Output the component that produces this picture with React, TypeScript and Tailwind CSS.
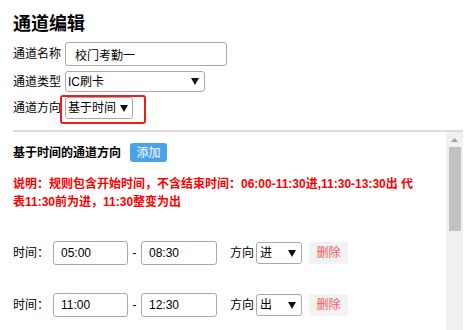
import React from 'react'

const FONT = "font-['Liberation_Sans','Noto_Sans_CJK_SC',sans-serif]"

function Arrow({ className = '' }: { className?: string }) {
  return (
    <svg className={'pointer-events-none absolute ' + className} width="8" height="7" viewBox="0 0 8 7">
      <polygon points="0,0 8,0 4,7" fill="#111" />
    </svg>
  )
}

function Select({ value, options, className, arrowClass }: { value: string; options: string[]; className: string; arrowClass: string }) {
  return (
    <div className="relative">
      <select
        defaultValue={value}
        className={'appearance-none border border-[#a9a9a9] rounded-[3px] bg-white text-[12px] text-black outline-none ' + className}
      >
        {options.map((o) => (
          <option key={o}>{o}</option>
        ))}
      </select>
      <Arrow className={arrowClass} />
    </div>
  )
}

const rows = [
  { from: '05:00', to: '08:30', dir: '进' },
  { from: '11:00', to: '12:30', dir: '出' },
]

export default function App() {
  return (
    <div className={'h-[330px] overflow-hidden bg-white text-[12px] text-black flex flex-col pl-[13px] pr-[8px] ' + FONT}>
      <h3 className="pt-[13px] text-[18px] leading-[22px] font-bold">通道编辑</h3>

      {/* 基本信息 */}
      <div className="mt-[7px] flex flex-col gap-[5px]">
        <div className="flex items-center gap-[4px]">
          <span className="w-[48px]">通道名称</span>
          <input
            defaultValue="校门考勤一"
            className="w-[162px] h-[24px] border border-[#a9a9a9] rounded-[3px] px-[9px] text-[12px] outline-none"
          />
        </div>
        <div className="flex items-center gap-[4px]">
          <span className="w-[48px]">通道类型</span>
          <Select
            value="IC刷卡"
            options={['IC刷卡', '人脸识别', '二维码']}
            className="w-[140px] h-[21px] pl-[2px]"
            arrowClass="right-[6px] top-[7px]"
          />
        </div>
        <div className="flex items-center gap-[4px]">
          <span className="w-[48px]">通道方向</span>
          <div className="relative">
            <Select
              value="基于时间"
              options={['基于时间', '固定进', '固定出']}
              className="w-[68px] h-[22px] pl-[2px]"
              arrowClass="right-[5px] top-[8px]"
            />
            {/* 标注框 */}
            <span className="pointer-events-none absolute -left-[5px] -top-[2px] w-[86px] h-[29px] border-2 border-[#ee1c1c] rounded-[3px]" />
          </div>
        </div>
      </div>

      {/* 时间规则列表 */}
      <div className="mt-[11px] flex-1 min-h-0 flex border-t-2 border-[#dcdcdc]">
        <div className="flex-1 min-w-0 overflow-hidden pr-[8px]">
          <div className="pt-[11px] flex items-baseline gap-[9px]">
            <span className="font-bold">基于时间的通道方向</span>
            <button className="h-[19px] w-[37px] pt-[2px] rounded-[3px] bg-[#4aa3e9] text-white text-[12px] leading-[17px]">
              添加
            </button>
          </div>

          <p className="mt-[13px] leading-[18px] font-bold text-[#ff0000]">
            说明：规则包含开始时间，不含结束时间：06:00-11:30进,11:30-13:30出 代
            <br />
            表11:30前为进，11:30整变为出
          </p>

          <div className="mt-[30px] flex flex-col gap-[28px]">
            {rows.map((r, i) => (
              <div key={i} className="flex items-center">
                <span className="w-[40px]">时间：</span>
                <input
                  defaultValue={r.from}
                  className="w-[75px] h-[24px] border border-[#a9a9a9] rounded-[3px] px-[7px] text-[12px] outline-none"
                />
                <span className="w-[13px] text-center">-</span>
                <input
                  defaultValue={r.to}
                  className="w-[76px] h-[24px] border border-[#a9a9a9] rounded-[3px] px-[7px] text-[12px] outline-none"
                />
                <span className="ml-[13px] mr-[2px]">方向</span>
                <Select
                  value={r.dir}
                  options={['进', '出']}
                  className="w-[46px] h-[22px] pl-[3px]"
                  arrowClass="right-[6px] top-[8px]"
                />
                <button className="ml-[7px] h-[22px] w-[39px] rounded-[3px] bg-[#f2f2f2] text-[12px] text-[#f25a58]">
                  删除
                </button>
              </div>
            ))}
          </div>
        </div>

        {/* 滚动条 */}
        <div className="w-[17px] bg-[#f0f0f0] flex flex-col">
          <div className="h-[15px] flex items-center justify-center">
            <svg width="7" height="4" viewBox="0 0 7 4">
              <polygon points="0,4 7,4 3.5,0" fill="#a3a3a3" />
            </svg>
          </div>
          <div className="ml-[3px] mr-[2px] h-[84px] bg-[#c1c1c1]" />
        </div>
      </div>
    </div>
  )
}
